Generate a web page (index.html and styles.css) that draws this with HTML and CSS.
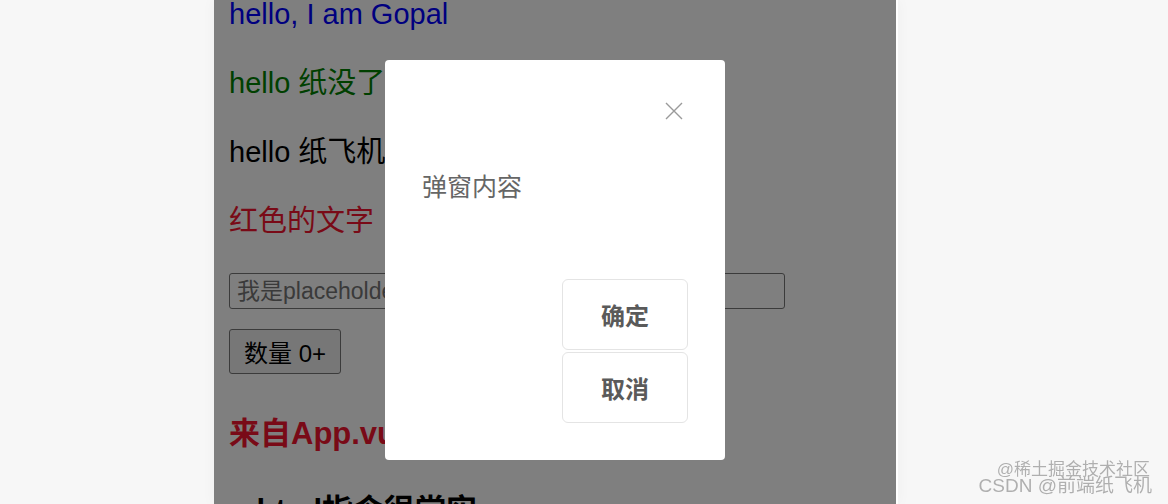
FILE: index.html
```html
<!doctype html>
<html lang="zh-CN">
<head>
    <meta charset="UTF-8">
    <title>弹窗</title>
    <link rel="stylesheet" href="styles.css">
</head>
<body>
<!-- 页面主体 -->
<div class="app">
    <p class="blue">hello, I am Gopal</p>
    <p class="green">hello 纸没了</p>
    <p>hello 纸飞机</p>
    <p class="red">红色的文字</p>
    <div class="field">
        <input type="text" placeholder="我是placeholder">
    </div>
    <div class="field field-btn">
        <button class="count">数量 0+</button>
    </div>
    <h3 class="title red">来自App.vue的内容</h3>
    <h3 class="title">v-html指令很堂实</h3>

    <!-- 遮罩层 -->
    <div class="mask"></div>
    <!-- 弹窗 -->
    <div class="modal">
        <div class="modal-head">
            <span class="close">
                <svg width="18" height="18" viewBox="0 0 18 18">
                    <path d="M1 1L17 17M17 1L1 17" stroke="#9a9a9a" stroke-width="1.4" fill="none"/>
                </svg>
            </span>
        </div>
        <div class="modal-body">弹窗内容</div>
        <div class="modal-foot">
            <button class="btn">确定</button>
            <button class="btn">取消</button>
        </div>
    </div>
</div>
<!-- 水印 -->
<div class="watermark">
    <div class="wm-top">@稀土掘金技术社区</div>
    <div class="wm-bottom">CSDN @前端纸飞机</div>
</div>
</body>
</html>
```

FILE: styles.css
```css
* {
    margin: 0;
    padding: 0;
    box-sizing: border-box;
}

html,
body {
    height: 100%;
    overflow: hidden;
}

body {
    background: #f7f7f7;
    font-family: "Liberation Sans", "Noto Sans CJK SC", sans-serif;
}

.app {
    position: relative;
    display: flow-root;
    width: 684px;
    height: 100%;
    margin-left: 214px;
    padding: 0 15px;
    background: #fff;
    border-right: 2px solid #fff;
    box-shadow: 0 0 14px rgba(0, 0, 0, 0.04);
}

.app p {
    font-size: 29px;
    line-height: 40px;
    margin: 29px 0;
    color: #000;
}

.app p:first-child {
    margin-top: -6px;
}

.blue {
    color: #0000ff !important;
}

.green {
    color: #008000 !important;
}

.red {
    color: #f2142e !important;
}

.field {
    margin-top: 32px;
}

.field input {
    display: block;
    width: 556px;
    height: 36px;
    padding: 0 7px;
    border: 1px solid #767676;
    border-radius: 3px;
    font-size: 23px;
    font-family: inherit;
    color: #000;
}

.field input::placeholder {
    color: #757575;
}

.field-btn {
    margin-top: 20px;
}

.count {
    height: 45px;
    padding: 0 14px;
    border: 1px solid #767676;
    border-radius: 3px;
    background: #efefef;
    font-size: 24px;
    font-family: inherit;
    color: #000;
}

.title {
    font-size: 31px;
    line-height: 40px;
    font-weight: bold;
    margin-top: 40px;
    color: #000;
}

.title + .title {
    margin-top: 37px;
}

.mask {
    position: absolute;
    left: 0;
    top: 0;
    right: 0;
    bottom: 0;
    background: rgba(0, 0, 0, 0.5);
}

.modal {
    position: absolute;
    left: 171px;
    top: 60px;
    width: 340px;
    height: 400px;
    padding: 37px 37px;
    background: #fff;
    border-radius: 4px;
    display: flex;
    flex-direction: column;
}

.modal-head {
    display: flex;
    justify-content: flex-end;
}

.close {
    width: 28px;
    height: 28px;
    display: flex;
    align-items: center;
    justify-content: center;
    cursor: pointer;
}

.modal-body {
    margin-top: 44px;
    padding-left: 0;
    font-size: 25px;
    line-height: 36px;
    color: #666;
}

.modal-foot {
    margin-top: 74px;
    display: flex;
    flex-direction: column;
    align-items: flex-end;
    gap: 2px;
}

.btn {
    width: 126px;
    height: 71px;
    border: 1px solid #e4e4e4;
    border-radius: 6px;
    background: #fff;
    font-size: 24px;
    font-weight: bold;
    font-family: inherit;
    color: #5a5a5a;
    cursor: pointer;
}

.watermark {
    position: fixed;
    right: 16px;
    bottom: 8px;
    text-align: right;
    color: rgba(110, 110, 110, 0.55);
    text-shadow: 0 0 1px #fff;
}

.wm-top {
    font-size: 17px;
    line-height: 12px;
    margin-right: 2px;
}

.wm-bottom {
    font-size: 19px;
    line-height: 20px;
}
```
